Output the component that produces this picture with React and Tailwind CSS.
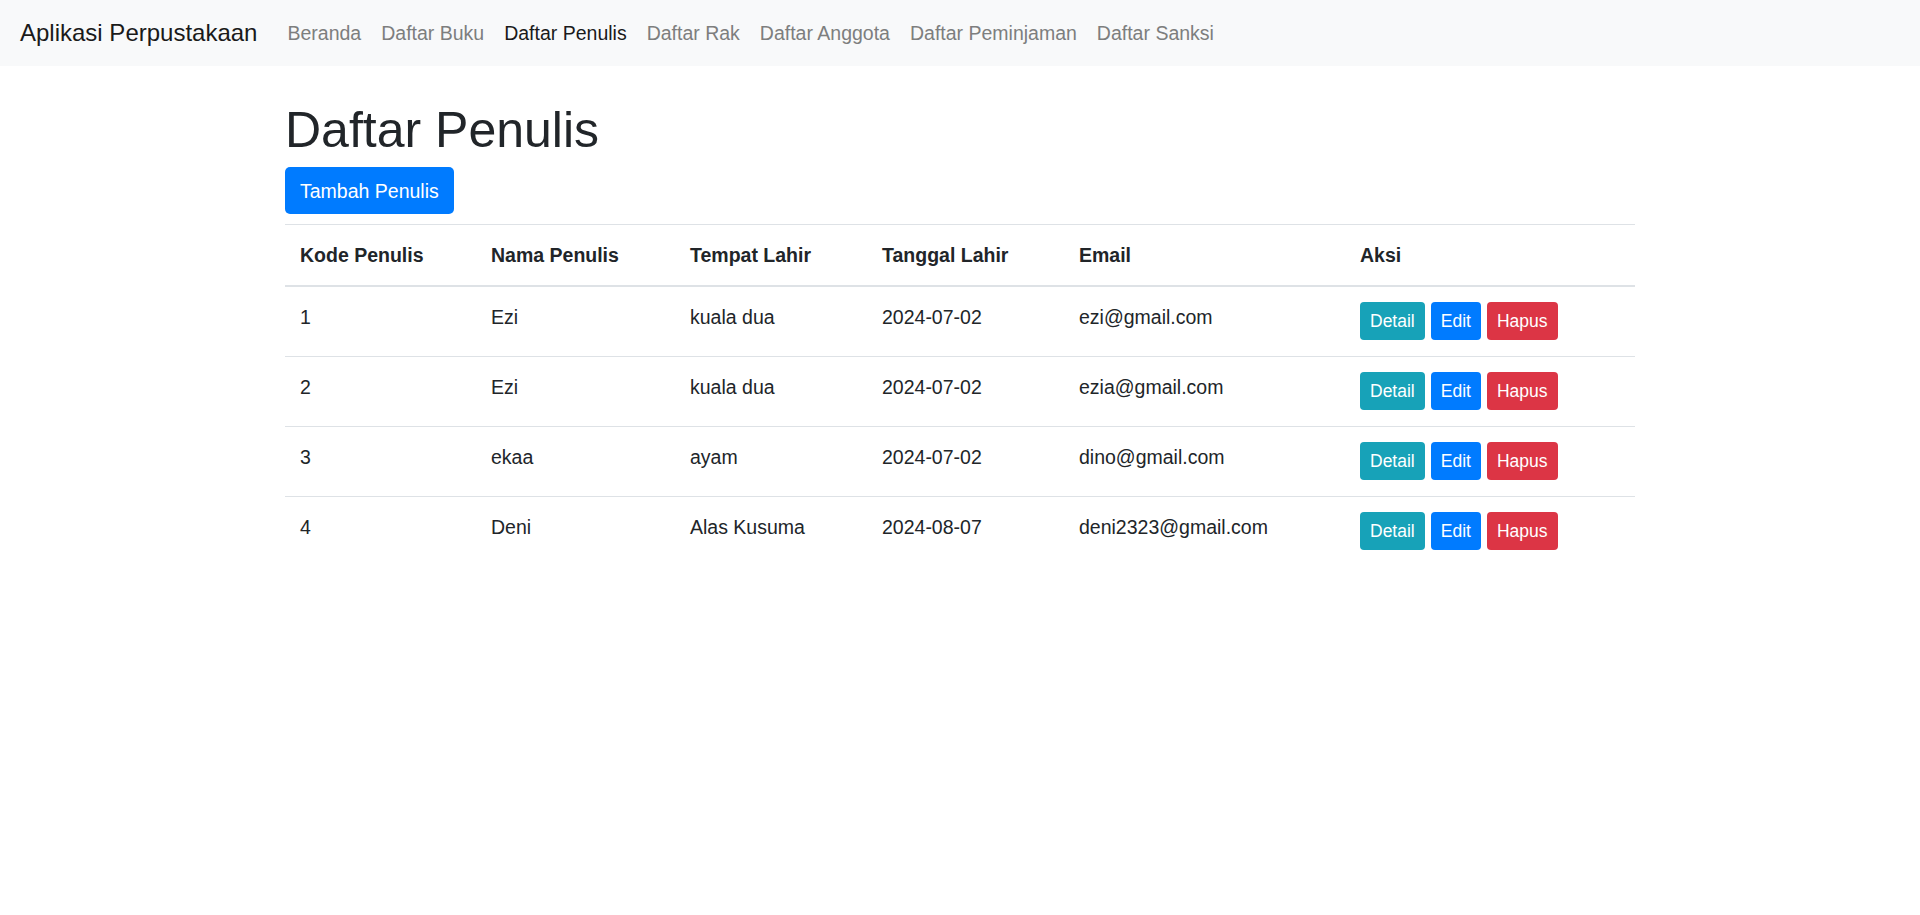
const navLinks = [
  { label: "Beranda", active: false },
  { label: "Daftar Buku", active: false },
  { label: "Daftar Penulis", active: true },
  { label: "Daftar Rak", active: false },
  { label: "Daftar Anggota", active: false },
  { label: "Daftar Peminjaman", active: false },
  { label: "Daftar Sanksi", active: false },
];

const penulis = [
  { kode: "1", nama: "Ezi", tempat: "kuala dua", tanggal: "2024-07-02", email: "ezi@gmail.com" },
  { kode: "2", nama: "Ezi", tempat: "kuala dua", tanggal: "2024-07-02", email: "ezia@gmail.com" },
  { kode: "3", nama: "ekaa", tempat: "ayam", tanggal: "2024-07-02", email: "dino@gmail.com" },
  { kode: "4", nama: "Deni", tempat: "Alas Kusuma", tanggal: "2024-08-07", email: "deni2323@gmail.com" },
];

const cols = "grid grid-cols-[191px_199px_192px_197px_281px_290px]";

function Navbar() {
  return (
    <nav className="h-[66px] bg-[#f8f9fa] flex items-center px-[20px]">
      <a href="#" className="text-[24px] leading-[38px] text-[#1a1a1a] mr-[20px]">
        Aplikasi Perpustakaan
      </a>
      <ul className="flex items-center">
        {navLinks.map((l) => (
          <li key={l.label}>
            <a
              href="#"
              className={
                "block px-[10px] text-[19.5px] leading-[30px] " +
                (l.active ? "text-[#1a1a1a]" : "text-[#7d7e7e]")
              }
            >
              {l.label}
            </a>
          </li>
        ))}
      </ul>
    </nav>
  );
}

function SmallBtn({ children, color }) {
  return (
    <button className={"h-[38px] px-[10px] rounded-[4px] text-white text-[17.5px] leading-[26px] " + color}>
      {children}
    </button>
  );
}

export default function App() {
  return (
    <div className="min-h-screen bg-white text-[#212529] font-['Liberation_Sans',Arial,sans-serif]">
      <Navbar />
      <div className="w-[1350px] mx-auto pt-[34px]">
        <h1 className="text-[50px] leading-[60px] font-medium mb-[7px]">Daftar Penulis</h1>
        <button className="h-[47px] px-[15px] rounded-[5px] bg-[#007bff] text-white text-[19.5px] leading-[30px]">
          Tambah Penulis
        </button>

        <div className="mt-[10px] text-[19.5px] leading-[30px]">
          <div className={cols + " border-t border-[#dee2e6] border-b-2 font-bold"}>
            {["Kode Penulis", "Nama Penulis", "Tempat Lahir", "Tanggal Lahir", "Email", "Aksi"].map((h) => (
              <div key={h} className="px-[15px] py-[15px]">{h}</div>
            ))}
          </div>
          {penulis.map((p, i) => (
            <div key={p.kode + p.email} className={cols + (i > 0 ? " border-t border-[#dee2e6]" : "")}>
              <div className="px-[15px] pt-[15px] pb-[16px]">{p.kode}</div>
              <div className="px-[15px] pt-[15px] pb-[16px]">{p.nama}</div>
              <div className="px-[15px] pt-[15px] pb-[16px]">{p.tempat}</div>
              <div className="px-[15px] pt-[15px] pb-[16px]">{p.tanggal}</div>
              <div className="px-[15px] pt-[15px] pb-[16px]">{p.email}</div>
              <div className="px-[15px] pt-[15px] pb-[16px] flex gap-[6px] items-start">
                <SmallBtn color="bg-[#17a2b8]">Detail</SmallBtn>
                <SmallBtn color="bg-[#007bff]">Edit</SmallBtn>
                <SmallBtn color="bg-[#dc3545]">Hapus</SmallBtn>
              </div>
            </div>
          ))}
        </div>
      </div>
    </div>
  );
}
